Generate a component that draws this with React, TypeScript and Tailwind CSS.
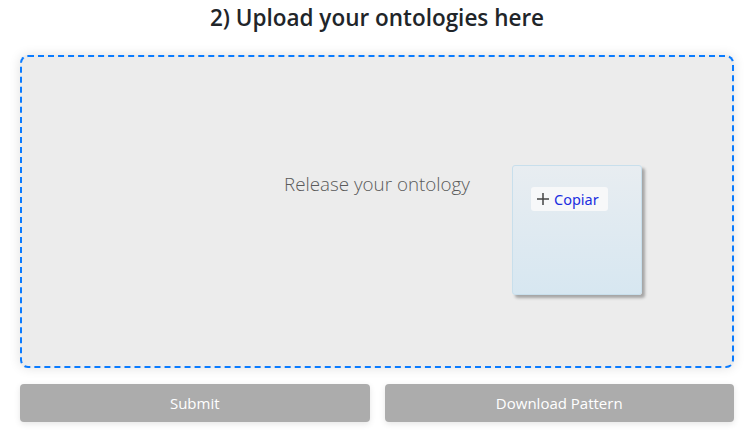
import React from "react";

export default function App() {
  return (
    <div className="w-[747px] h-[430px] bg-white pl-[20px] pr-[13px] overflow-hidden" style={{ fontFamily: '"Open Sans", "Noto Sans", sans-serif' }}>
      <h2 className="text-center text-[22.5px] font-semibold text-[#212529] pt-[2px] h-[53px] leading-[32px]">
        2) Upload your ontologies here
      </h2>
      <div className="relative mt-[2px] h-[313px] rounded-[8px] border-2 border-dashed border-[#0a7bff] bg-[#ececec] shadow-[0_0_12px_rgba(0,0,0,0.12)]">
        <div className="flex justify-center pt-[113px]">
          <span className="text-[18.8px] font-light text-[#5a5a5a] leading-[28px]">Release your ontology</span>
        </div>
        <div className="absolute left-[490px] top-[108px] w-[130px] h-[130px] rounded-[3px] border border-[#c8dfec] bg-gradient-to-b from-[#e8edf1] to-[#d7e7f1] shadow-[3px_3px_3px_rgba(0,0,0,0.3)]">
          <div className="absolute left-[18px] top-[21px] w-[77px] h-[24px] rounded-[3px] bg-[#f7f8f9] flex items-center pl-[5px] gap-[4px]">
            <svg width="14" height="14" viewBox="0 0 14 14">
              <path d="M7 1v12M1 7h12" stroke="#444" strokeWidth="1.5" />
            </svg>
            <span className="text-[14.5px] text-[#1b2fe0] leading-none" style={{ fontFamily: '"Noto Sans", sans-serif' }}>Copiar</span>
          </div>
        </div>
      </div>
      <div className="mt-[16px] grid grid-cols-2 gap-[15px]">
        <button className="h-[38px] rounded-[4px] bg-[#acacac] text-white text-[15px] shadow-[0_2px_6px_rgba(0,0,0,0.1)]">Submit</button>
        <button className="h-[38px] rounded-[4px] bg-[#acacac] text-white text-[15px] shadow-[0_2px_6px_rgba(0,0,0,0.1)]">Download Pattern</button>
      </div>
    </div>
  );
}
